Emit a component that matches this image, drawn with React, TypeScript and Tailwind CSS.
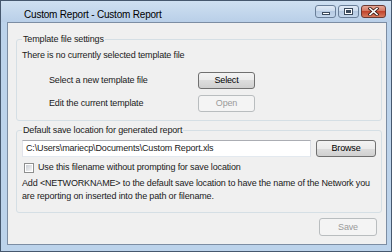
import clsx from "clsx";

function WinButton({
  label,
  disabled,
  className,
}: {
  label: string;
  disabled?: boolean;
  className?: string;
}) {
  return (
    <button
      disabled={disabled}
      className={clsx(
        "rounded-[3px] border text-[9px] leading-none",
        disabled
          ? "border-[#b9bdbf] bg-[#f4f4f4] text-[#9a9a9a]"
          : "border-[#707070] bg-[linear-gradient(#f3f3f3,#ebebeb_50%,#dddddd_50%,#d0d0d0)] text-black",
        className
      )}
    >
      {label}
    </button>
  );
}

function CaptionButtons() {
  return (
    <div className="ml-auto mr-[5px] flex gap-[2px] self-start pt-[4px]">
      <div className="flex h-[13px] w-[21px] items-center justify-center rounded-[3px] border border-[#6a7f99] bg-[linear-gradient(#e2ebf6,#c9d9ec_50%,#b6cae2_50%,#c3d6ec)]">
        <div className="mt-[3px] h-[3px] w-[8px] border border-[#3b4a5c] bg-white" />
      </div>
      <div className="flex h-[13px] w-[21px] items-center justify-center rounded-[3px] border border-[#6a7f99] bg-[linear-gradient(#e2ebf6,#c9d9ec_50%,#b6cae2_50%,#c3d6ec)]">
        <div className="h-[7px] w-[9px] border border-[#3b4a5c] bg-white p-[1px]">
          <div className="h-full w-full bg-[#3b4a5c]" />
        </div>
      </div>
      <div className="flex h-[13px] w-[25px] items-center justify-center rounded-[3px] border border-[#6b3a33] bg-[linear-gradient(#e6a897,#d2705a_50%,#c2452d_50%,#d67a5e)]">
        <svg width="11" height="9" viewBox="0 0 11 9">
          <path
            d="M2 1.5 L9 7.5 M9 1.5 L2 7.5"
            stroke="#3a1d18"
            strokeWidth="3.2"
            strokeLinecap="square"
          />
          <path
            d="M2 1.5 L9 7.5 M9 1.5 L2 7.5"
            stroke="#ffffff"
            strokeWidth="1.6"
            strokeLinecap="square"
          />
        </svg>
      </div>
    </div>
  );
}

export default function App() {
  return (
    <div className="flex h-[252px] w-[392px] flex-col border border-[#46586e] bg-[#bcd3eb] font-['Liberation_Sans',Arial,sans-serif] text-[9px] tracking-[-0.15px] text-[#1a1a1a]">
      {/* title bar */}
      <div className="flex h-[21px] shrink-0 items-center bg-[linear-gradient(#cfe0f1,#b9cfe8)] pl-[23px]">
        <span className="mt-[5px] text-[10px] tracking-[-0.2px] text-black">
          Custom Report - Custom Report
        </span>
        <CaptionButtons />
      </div>

      {/* client area */}
      <div className="mb-[6px] ml-[6px] mr-[4px] flex flex-1 flex-col border border-[#7c8da3] bg-[#f0f0f0]">
        <fieldset className="ml-[8px] mr-[4px] mt-[11px] rounded-[3px] border border-[#d5dfe5] pb-[8px] pl-[5px]">
          <legend className="px-[1px] leading-[11px]">Template file settings</legend>
          <div className="mt-[5px] leading-[11px]">
            There is no currently selected template file
          </div>
          <div className="mt-[11px] grid grid-cols-[149px_57px] items-center gap-y-[6px] pl-[27px]">
            <span>Select a new template file</span>
            <WinButton label="Select" className="h-[17px]" />
            <span>Edit the current template</span>
            <WinButton label="Open" disabled className="h-[17px]" />
          </div>
        </fieldset>

        <fieldset className="ml-[8px] mr-[4px] mt-[4px] rounded-[3px] border border-[#d5dfe5] pb-[9px] pl-[5px] pr-[5px]">
          <legend className="px-[1px] leading-[11px]">
            Default save location for generated report
          </legend>
          <div className="mt-[4px] flex items-center gap-[5px]">
            <div className="flex h-[17px] flex-1 items-center border border-[#abadb3] border-l-[#e2e3ea] border-r-[#dbdfe6] border-b-[#e3e9ef] bg-white pl-[3px]">
              C:\Users\mariecp\Documents\Custom Report.xls
            </div>
            <WinButton label="Browse" className="h-[17px] w-[60px]" />
          </div>
          <label className="mt-[5px] flex items-center gap-[4px] pl-[2px]">
            <span className="flex h-[10px] w-[10px] items-center justify-center border border-[#8e8f8f] bg-white">
              <span className="h-[6px] w-[6px] bg-[linear-gradient(135deg,#cbcfd5,#f6f6f6)]" />
            </span>
            <span className="leading-[11px]">
              Use this filename without prompting for save location
            </span>
          </label>
          <p className="mt-[4px] leading-[13px]">
            Add &lt;NETWORKNAME&gt; to the default save location to have the name of the Network you
            <br />
            are reporting on inserted into the path or filename.
          </p>
        </fieldset>

        <div className="mr-[9px] mt-[5px] flex justify-end">
          <WinButton label="Save" disabled className="h-[18px] w-[58px]" />
        </div>
      </div>
    </div>
  );
}
